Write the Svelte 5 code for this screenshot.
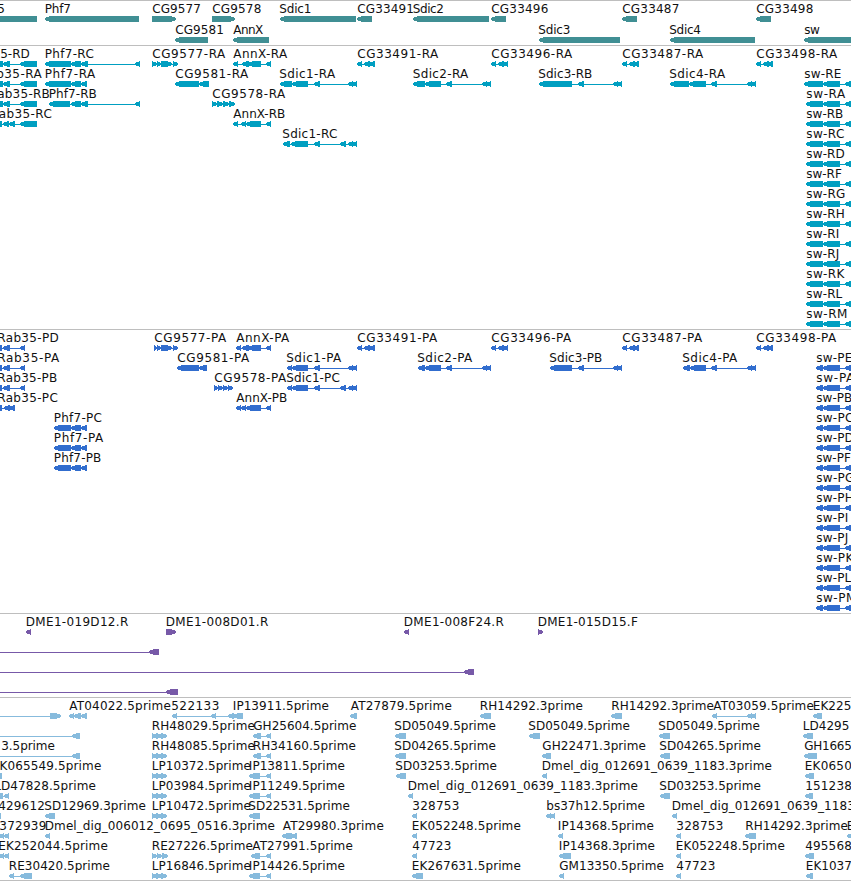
<script lang="ts">
  type Block = [number, number];
  // row, label, label start, label end, blocks, strand (1 = forward)
  type Feature = [number, string, number, number, Block[], number?];

  interface Track {
    name: string;
    height: number;
    pitch: number;
    features: Feature[];
  }

  const isoforms = ["E", "A", "B", "C", "D", "F", "G", "H", "I", "J", "K", "L", "M"];
  const isoformEnds = [841, 845, 843, 844, 844.5, 841.5, 845, 844.5, 839, 839, 844, 842, 847];

  const swTail: Block[] = [[823, 840], [845, 857]];
  const swTranscripts: Feature[] = isoforms.map((c, i) => [
    i + 1, `sw-R${c}`, i ? 806 : 804, isoformEnds[i], [[i ? 806 : 804, 823], ...swTail],
  ]);
  const swProteins: Feature[] = isoforms.map((c, i) => [
    i + 1, `sw-P${c}`, 816, isoformEnds[i] + (i ? 9 : 11), [[816, 823], ...swTail],
  ]);

  const clone: Block[] = [[152, 157], [156, 162], [161, 167]];
  const annxTail: Block[] = [[249, 260], [266, 271]];

  const tracks: Track[] = [
    {
      name: "gene", height: 45, pitch: 21,
      features: [
        [0, "Rab35", -31, 4.5, [[-32, 37]]],
        [0, "Phf7", 44.5, 70.5, [[45, 139]]],
        [0, "CG9577", 152, 200.5, [[152, 176]], 1],
        [0, "CG9578", 212, 261, [[212, 235]], 1],
        [0, "Sdic1", 279, 311, [[280, 356]]],
        [0, "CG33491", 357, 413.5, [[357, 372]]],
        [0, "Sdic2", 412.5, 443.5, [[413, 489]]],
        [0, "CG33496", 491, 548, [[491, 506]]],
        [0, "CG33487", 622, 679, [[622, 637]]],
        [0, "CG33498", 756, 813, [[756, 771]]],
        [1, "CG9581", 175, 223.5, [[175, 208]]],
        [1, "AnnX", 233, 263, [[233, 269]]],
        [1, "Sdic3", 538, 570, [[539, 620]]],
        [1, "Sdic4", 669, 700.5, [[670, 755]]],
        [1, "sw", 804, 819.5, [[804, 860]]],
      ],
    },
    {
      name: "transcript", height: 284, pitch: 20,
      features: [
        [0, "Rab35-RD", -31, 29.5, [[-10, 3], [3, 10], [20, 37]]],
        [1, "Rab35-RA", -20.5, 41.5, [[-10, 3], [3, 10], [20, 37]]],
        [2, "Rab35-RB", -11.5, 49.5, [[-10, 3], [3, 10], [20, 37]]],
        [3, "Rab35-RC", -10, 51.5, [[-10, 2], [3, 9], [9, 15], [20, 37]]],
        [0, "Phf7-RC", 44.5, 93.5, [[45, 71], [71, 81], [81, 88], [135, 140]]],
        [1, "Phf7-RA", 44.5, 95, [[45, 71], [71, 81], [81, 87]]],
        [2, "Phf7-RB", 48.5, 96.5, [[49, 70], [71, 81], [81, 88], [135, 140]]],
        [0, "CG9577-RA", 152, 225, [[152, 157], [157, 161], [161, 172], [173, 178]], 1],
        [1, "CG9581-RA", 175, 248, [[175, 199], [199, 209]]],
        [2, "CG9578-RA", 212, 285, [[212, 217], [217, 223], [223, 229], [229, 235]], 1],
        [0, "AnnX-RA", 233, 287, [[233, 238], [242, 249], [248, 261], [266, 271]]],
        [3, "AnnX-RB", 233, 285, [[233, 238], [241, 246], [246, 261], [266, 271]]],
        [1, "Sdic1-RA", 279, 335, [[280, 292], [292, 308], [314, 320], [348, 353], [352, 357]]],
        [4, "Sdic1-RC", 282, 337, [[283, 290], [291, 308], [314, 320], [340, 346], [348, 353], [352, 357]]],
        [0, "CG33491-RA", 357, 438, [[357, 362], [364, 370], [369, 375]]],
        [1, "Sdic2-RA", 412.5, 468, [[413, 425], [425, 441], [446, 452], [482, 487], [486, 491]]],
        [0, "CG33496-RA", 491, 572, [[491, 496], [498, 504], [503, 508]]],
        [1, "Sdic3-RB", 538, 592, [[539, 572], [578, 584], [613, 618], [617, 622]]],
        [0, "CG33487-RA", 622, 703, [[622, 627], [629, 635], [633, 639]]],
        [1, "Sdic4-RA", 669, 725, [[670, 689], [689, 706], [711, 717], [747, 752], [751, 756]]],
        [0, "CG33498-RA", 756, 837, [[756, 761], [763, 769], [767, 773]]],
        ...swTranscripts,
      ],
    },
    {
      name: "protein", height: 284, pitch: 20,
      features: [
        [0, "Rab35-PD", -3, 58.5, [[-5, 2], [3, 10], [20, 25]]],
        [1, "Rab35-PA", -3, 59, [[-5, 2], [3, 10], [20, 25]]],
        [2, "Rab35-PB", -3, 57, [[-5, 2], [3, 10], [20, 25]]],
        [3, "Rab35-PC", -3, 57.5, [[-5, 2], [4, 10], [9, 15]]],
        [4, "Phf7-PC", 53.5, 101.5, [[54, 71], [71, 81], [81, 87]]],
        [5, "Phf7-PA", 53.5, 103, [[54, 71], [71, 81], [81, 87]]],
        [6, "Phf7-PB", 53.5, 101, [[54, 71], [71, 81], [81, 87]]],
        [0, "CG9577-PA", 154, 226, [[154, 157], [157, 161], [161, 172], [173, 178]], 1],
        [1, "CG9581-PA", 177, 249, [[177, 199], [199, 207]]],
        [2, "CG9578-PA", 214, 286, [[214, 218], [218, 223], [223, 228], [228, 233]], 1],
        [0, "AnnX-PA", 236, 289, [[236, 241], [242, 249], [248, 261], [266, 271]]],
        [3, "AnnX-PB", 236, 287, [[236, 241], [241, 246], [246, 261], [266, 271]]],
        [1, "Sdic1-PA", 286, 341, [[287, 292], [292, 308], [314, 320], [348, 353], [352, 357]]],
        [2, "Sdic1-PC", 286, 339.5, [[287, 292], [292, 308], [314, 320], [340, 346], [348, 353], [352, 357]]],
        [0, "CG33491-PA", 357, 437, [[357, 362], [364, 370], [369, 375]]],
        [1, "Sdic2-PA", 417, 472, [[418, 425], [425, 441], [446, 452], [482, 487], [486, 491]]],
        [0, "CG33496-PA", 491, 571, [[491, 496], [498, 504], [503, 508]]],
        [1, "Sdic3-PB", 549, 602, [[550, 572], [578, 584], [613, 618], [617, 622]]],
        [0, "CG33487-PA", 622, 702, [[622, 627], [629, 635], [633, 639]]],
        [1, "Sdic4-PA", 682, 737, [[683, 690], [690, 706], [711, 717], [747, 752], [751, 756]]],
        [0, "CG33498-PA", 756, 836, [[756, 761], [763, 769], [767, 773]]],
        ...swProteins,
      ],
    },
    {
      name: "bac", height: 84, pitch: 20,
      features: [
        [0, "DME1-019D12.R", 25.5, 128, [[26, 31]]],
        [0, "DME1-008D01.R", 165.5, 268, [[166, 176]], 1],
        [0, "DME1-008F24.R", 403.5, 503.5, [[404, 409]]],
        [0, "DME1-015D15.F", 537.5, 637.5, [[538, 543]], 1],
        [1, "", 0, 0, [[-20, -10], [149, 159]]],
        [2, "", 0, 0, [[-20, -10], [464, 474]]],
        [3, "", 0, 0, [[-20, -10], [166, 178]]],
      ],
    },
    {
      name: "est", height: 183, pitch: 20,
      features: [
        [0, "", 0, 0, [[-20, -10], [50, 61]], 1],
        [0, "AT04022.5prime", 69, 170.5, [[69, 74], [74, 81], [81, 87]]],
        [0, "522133", 171, 219, [[172, 177], [211, 216], [228, 234]]],
        [0, "IP13911.5prime", 232.5, 328.5, [[233, 243]]],
        [0, "AT27879.5prime", 350.5, 451.5, [[350, 357]]],
        [0, "RH14292.3prime", 479.5, 582.5, [[480, 491]]],
        [0, "RH14292.3prime", 611, 713.5, [[611, 622]]],
        [0, "AT03059.5prime", 713, 813.5, [[712, 717], [747, 752], [751, 756]]],
        [0, "EK225", 812.5, 851, [[813, 822]]],

        [1, "", 0, 0, [[-20, -10], [72, 80]]],
        [1, "RH48029.5prime", 151.5, 254.5, clone, 1],
        [1, "GH25604.5prime", 253, 356, [[253, 261], [266, 271]]],
        [1, "SD05049.5prime", 394, 495.5, [[395, 406]]],
        [1, "SD05049.5prime", 528, 629.5, [[529, 540]]],
        [1, "SD05049.5prime", 658, 759.5, [[659, 670]]],
        [1, "LD4295", 802.5, 849, [[803, 813]]],

        [2, "3.5prime", 1, 54.5, [[-10, -5], [72, 80]]],
        [2, "RH48085.5prime", 151.5, 254.5, clone, 1],
        [2, "RH34160.5prime", 252.5, 355.5, [[253, 261], [266, 271]]],
        [2, "SD04265.5prime", 394, 495.5, [[395, 406]]],
        [2, "GH22471.3prime", 542, 645.5, [[542, 551]]],
        [2, "SD04265.5prime", 659, 760.5, [[660, 670]]],
        [2, "GH1665", 804, 851.5, [[804, 817]]],

        [3, "EK065549.5prime", -8.5, 101, [[-4, 2]]],
        [3, "LP10372.5prime", 151.5, 250.5, clone, 1],
        [3, "IP13811.5prime", 248.5, 344.5, annxTail],
        [3, "SD03253.5prime", 395, 496.5, [[396, 406]]],
        [3, "Dmel_dig_012691_0639_1183.3prime", 541.5, 771.5, [[542, 547]]],
        [3, "EK0650", 804.5, 851.5, [[805, 814]]],

        [4, "LD47828.5prime", -6, 95.5, [[-5, 3], [4, 9]]],
        [4, "LP03984.5prime", 151.5, 250.5, clone, 1],
        [4, "IP11249.5prime", 248.5, 344.5, annxTail],
        [4, "Dmel_dig_012691_0639_1183.3prime", 407.5, 637.5, [[408, 413]]],
        [4, "SD03253.5prime", 659, 760.5, [[660, 670]]],
        [4, "151238", 805, 851.5, [[805, 813]]],

        [5, "429612", -2, 44.5, [[-4, 1]]],
        [5, "SD12969.3prime", 44, 145.5, [[45, 55]]],
        [5, "LP10472.5prime", 151.5, 250.5, clone, 1],
        [5, "SD22531.5prime", 248, 349.5, [[249, 260]]],
        [5, "328753", 412, 459, [[412, 417]]],
        [5, "bs37h12.5prime", 546, 644.5, [[546, 551], [550, 555]]],
        [5, "Dmel_dig_012691_0639_1183.3prime", 671.5, 901.5, [[672, 677]]],

        [6, "372939", -1, 46, [[-1, 4], [4, 9]]],
        [6, "Dmel_dig_006012_0695_0516.3prime", 44.5, 274.5, [[45, 50]]],
        [6, "AT29980.3prime", 282.5, 383.5, [[282, 292], [291, 297]]],
        [6, "EK052248.5prime", 411.5, 520.5, [[412, 417]]],
        [6, "IP14368.5prime", 557.5, 653.5, [[558, 563]]],
        [6, "328753", 676, 723, [[676, 681]]],
        [6, "RH14292.3prime", 745, 847.5, [[745, 756]]],
        [6, "EK", 846.5, 862, [[847, 853]]],

        [7, "EK252044.5prime", -2, 107.5, [[-1, 4], [4, 9]]],
        [7, "RE27226.5prime", 151.5, 252.5, [[152, 157], [157, 162], [162, 168]], 1],
        [7, "AT27991.5prime", 252, 352.5, [[251, 260], [266, 271]]],
        [7, "47723", 412, 451, [[412, 417]]],
        [7, "IP14368.3prime", 558.5, 654.5, [[559, 571]]],
        [7, "EK052248.5prime", 675.5, 784.5, [[676, 681]]],
        [7, "495568", 805, 851.5, [[805, 814]]],

        [8, "RE30420.5prime", 8.5, 109.5, [[9, 14], [20, 32]]],
        [8, "LP16846.5prime", 151.5, 250.5, clone, 1],
        [8, "IP14426.5prime", 248.5, 344.5, annxTail],
        [8, "EK267631.5prime", 411.5, 520.5, [[412, 423]]],
        [8, "GM13350.5prime", 559, 663.5, [[559, 564]]],
        [8, "47723", 676, 715, [[676, 681]]],
        [8, "EK1037", 805.5, 851.5, [[806, 813]]],
      ],
    },
  ];

  const HEAD = 5;

  // A box with a pointed end on the side the strand runs to.
  function arrow([a, b]: Block, y: number, forward: boolean) {
    const head = Math.min(HEAD, b - a);
    const tip = forward ? b : a;
    const neck = forward ? b - head : a + head;
    const back = forward ? a : b;
    return `${tip},${y + 2} ${neck},${y} ${back},${y} ${back},${y + 6} ${neck},${y + 6} ${tip},${y + 4}`;
  }
</script>

<main class="browser">
  {#each tracks as track (track.name)}
    <section class="track {track.name}">
      <svg width="851" height={track.height - 1}>
        {#each track.features as [row, label, x, end, blocks, strand]}
          {@const y = row * track.pitch}
          {@const first = blocks[0][0]}
          {@const last = blocks[blocks.length - 1][1]}
          {#if blocks.length > 1}
            <rect x={first + 2} y={y + 18} width={last - first - 4} height="1" />
          {/if}
          {#each blocks as block}
            <polygon points={arrow(block, y + 15, strand === 1)} />
          {/each}
          {#if label}
            <text x={x + 0.3} y={y + 12} textLength={end - x}>{label}</text>
          {/if}
        {/each}
      </svg>
    </section>
  {/each}
</main>

<style>
  :global(body) {
    background: #fff;
    overflow: hidden;
  }

  .browser {
    display: flex;
    flex-direction: column;
    width: 851px;
    height: 881px;
    box-sizing: border-box;
    border-bottom: 1px solid #bebebe;
    background: #fff;
    overflow: hidden;
  }

  .track {
    flex: none;
    border-top: 1px solid #bebebe;
    color: #408f94;
  }

  .transcript {
    color: #009fc1;
  }

  .protein {
    color: #316dce;
  }

  .bac {
    color: #7759a8;
  }

  .est {
    color: #87bbdd;
  }

  svg {
    display: block;
    overflow: hidden;
  }

  rect,
  polygon {
    fill: currentColor;
    shape-rendering: crispEdges;
  }

  text {
    fill: #111;
    font-family: "DejaVu Sans", sans-serif;
    font-size: 12px;
  }
</style>
